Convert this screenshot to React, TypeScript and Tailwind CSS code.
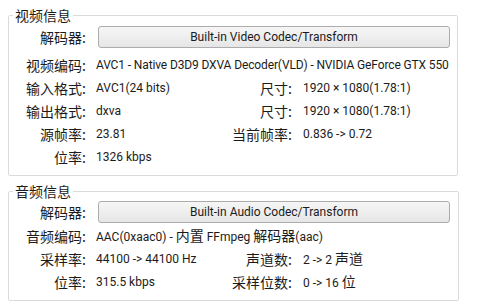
import React from "react";

function Label({ children, w = "w-[77px]" }: { children: React.ReactNode; w?: string }) {
  return (
    <div className={`${w} shrink-0 text-right whitespace-nowrap text-[14px] leading-[16px] font-['Noto_Sans_CJK_SC',sans-serif]`}>
      {children}
      <span className="inline-block w-[4px] text-left">:</span>
    </div>
  );
}

function Cjk({ children }: { children: React.ReactNode }) {
  return <span className="text-[14px] font-['Noto_Sans_CJK_SC',sans-serif]">{children}</span>;
}

function Row({
  l1,
  v1,
  l2,
  v2,
}: {
  l1: string;
  v1: React.ReactNode;
  l2?: string;
  v2?: React.ReactNode;
}) {
  return (
    <div className="flex items-center h-[23px] whitespace-nowrap">
      <Label>{l1}</Label>
      <div className="ml-[10px] w-[136px] shrink-0">{v1}</div>
      {l2 ? <Label w="w-[60px]">{l2}</Label> : null}
      {v2 ? <div className="ml-[11px]">{v2}</div> : null}
    </div>
  );
}

function CodecButton({ text }: { text: string }) {
  return (
    <div className="ml-[12px] w-[352px] h-[22px] flex items-center justify-center border border-[#acacac] rounded-[3px] bg-gradient-to-b from-[#f6f6f6] to-[#e6e6e6] text-[#1b1b1b]">
      {text}
    </div>
  );
}

export default function App() {
  return (
    <div className="w-[479px] h-[305px] bg-white overflow-hidden pt-[7px] pl-[8px] text-[12px] leading-[16px] text-[#1b1b1b] font-['Roboto','Noto_Sans_CJK_SC',sans-serif]">
      <fieldset className="w-[450px] border border-[#dadada] rounded-[2px] m-0 p-0 min-w-0">
        <legend className="ml-[4px] px-[2px] text-[14px] font-['Noto_Sans_CJK_SC',sans-serif]">视频信息</legend>
        <div className="pt-[3px] pb-[7px] flex flex-col">
          <div className="flex items-center h-[22px]">
            <Label>解码器</Label>
            <CodecButton text="Built-in Video Codec/Transform" />
          </div>
          <div className="mt-[5px] flex items-center h-[23px] whitespace-nowrap">
            <Label>视频编码</Label>
            <div className="ml-[10px] tracking-[-0.13px]">AVC1 - Native D3D9 DXVA Decoder(VLD) - NVIDIA GeForce GTX 550</div>
          </div>
          <Row l1="输入格式" v1="AVC1(24 bits)" l2="尺寸" v2="1920 × 1080(1.78:1)" />
          <Row l1="输出格式" v1="dxva" l2="尺寸" v2="1920 × 1080(1.78:1)" />
          <Row l1="源帧率" v1="23.81" l2="当前帧率" v2="0.836 -> 0.72" />
          <Row l1="位率" v1="1326 kbps" />
        </div>
      </fieldset>
      <fieldset className="mt-[7px] w-[451px] border border-[#dadada] rounded-[2px] m-0 p-0 min-w-0">
        <legend className="ml-[4px] px-[2px] text-[14px] font-['Noto_Sans_CJK_SC',sans-serif]">音频信息</legend>
        <div className="pt-[2px] pb-[7px] flex flex-col">
          <div className="flex items-center h-[21px]">
            <Label>解码器</Label>
            <CodecButton text="Built-in Audio Codec/Transform" />
          </div>
          <div className="mt-[2px] flex items-center h-[23px] whitespace-nowrap">
            <Label>音频编码</Label>
            <div className="ml-[10px]">
              AAC(0xaac0) - <Cjk>内置</Cjk> FFmpeg <Cjk>解码器</Cjk>(aac)
            </div>
          </div>
          <Row l1="采样率" v1="44100 -> 44100 Hz" l2="声道数" v2={<>2 -&gt; 2 <Cjk>声道</Cjk></>} />
          <Row l1="位率" v1="315.5 kbps" l2="采样位数" v2={<>0 -&gt; 16 <Cjk>位</Cjk></>} />
        </div>
      </fieldset>
    </div>
  );
}
